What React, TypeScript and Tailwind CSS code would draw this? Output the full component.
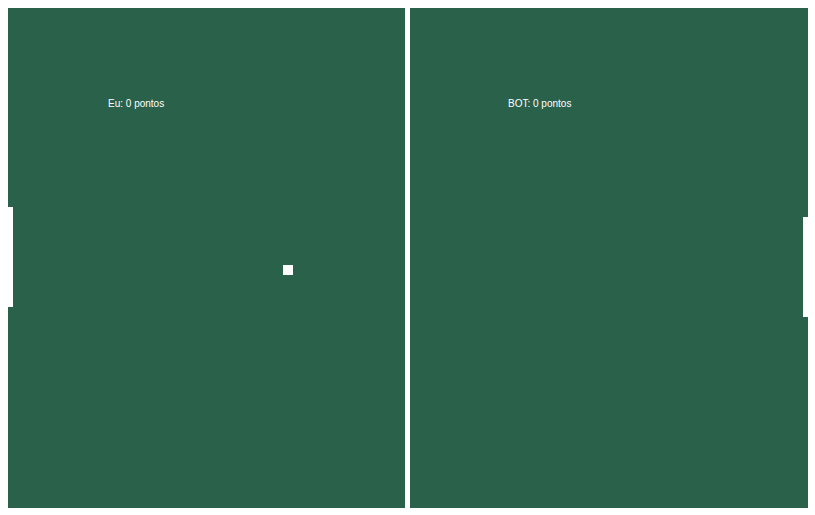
import React from "react";

// Placar e posições do jogo (canvas 800x500)
const game = {
  player: { score: 0, x: 0, y: 199 },
  bot: { score: 0, x: 795, y: 209 },
  ball: { x: 275, y: 257 },
};

function Paddle({ x, y }: { x: number; y: number }) {
  return (
    <div
      className="absolute w-[5px] h-[100px] bg-white"
      style={{ left: x, top: y }}
    />
  );
}

export default function App() {
  return (
    <div className="p-2 bg-white min-h-screen">
      <div
        className="relative w-[800px] h-[500px] bg-[#29614a] overflow-hidden"
        style={{ fontFamily: '"Liberation Sans", Arial, sans-serif' }}
      >
        {/* Rede */}
        <div className="absolute left-[397px] top-0 w-[5px] h-full bg-white" />

        {/* Placar */}
        <span className="absolute left-[100px] top-[91px] text-[10px] leading-none text-white whitespace-nowrap">
          Eu: {game.player.score} pontos
        </span>
        <span className="absolute left-[500px] top-[91px] text-[10px] leading-none text-white whitespace-nowrap">
          BOT: {game.bot.score} pontos
        </span>

        {/* Raquetes */}
        <Paddle x={game.player.x} y={game.player.y} />
        <Paddle x={game.bot.x} y={game.bot.y} />

        {/* Bola */}
        <div
          className="absolute w-[10px] h-[10px] bg-white"
          style={{ left: game.ball.x, top: game.ball.y }}
        />
      </div>
    </div>
  );
}
